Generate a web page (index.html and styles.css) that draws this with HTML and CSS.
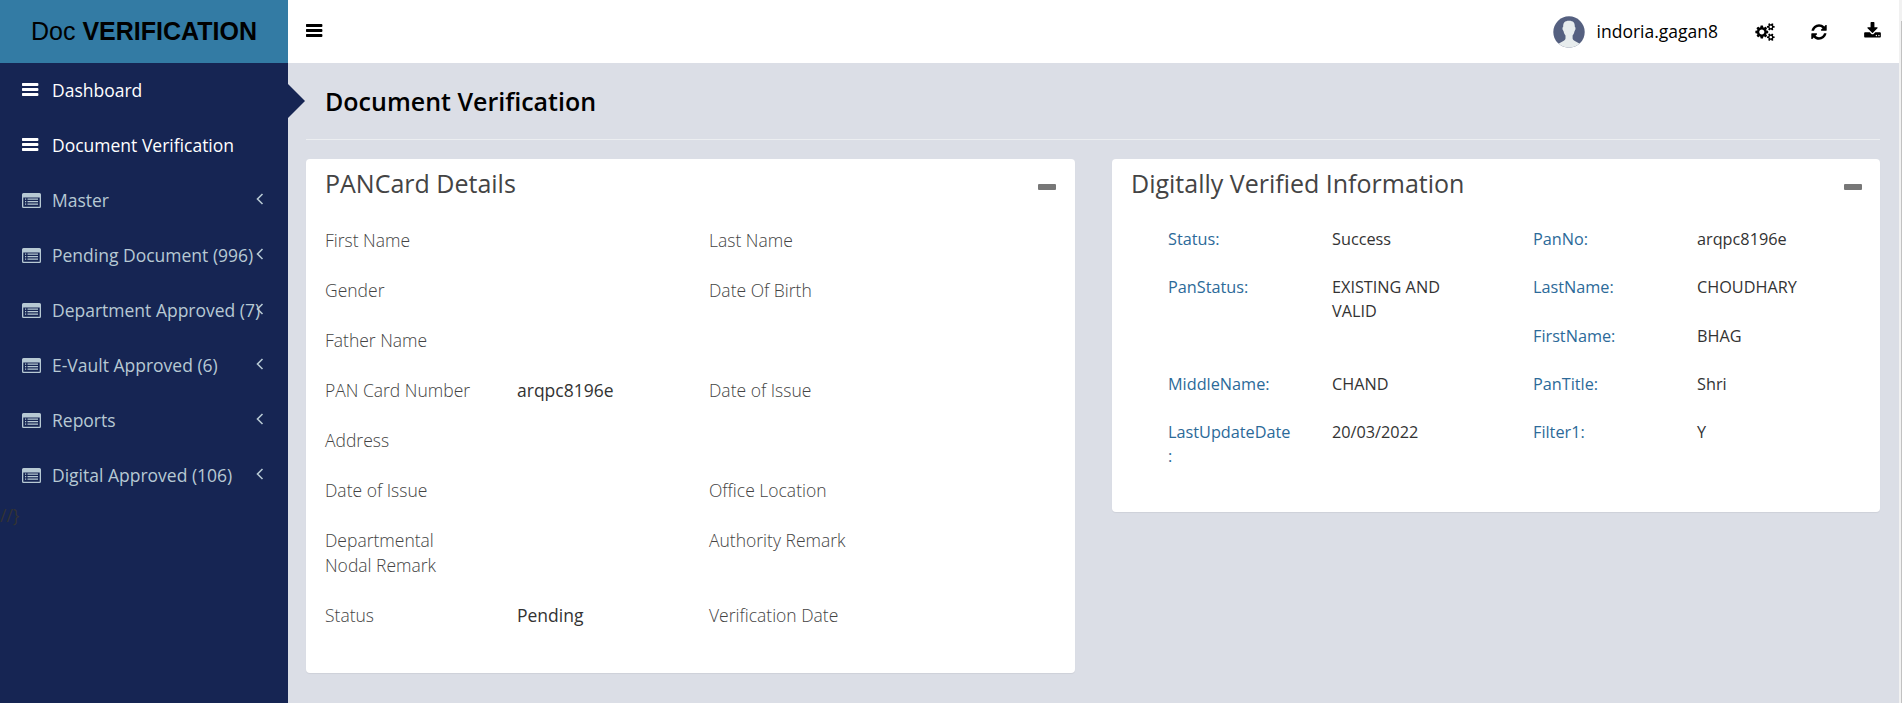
FILE: index.html
```html
<!DOCTYPE html>
<html lang="en">
<head>
<meta charset="utf-8">
<title>Document Verification</title>
<link rel="stylesheet" href="styles.css">
</head>
<body>
<svg class="defs" width="0" height="0">
  <symbol id="bars" viewBox="0 0 17 14"><path d="M.5 0h15q.9 0 .9.9v1.200q0 .9-.9.9H.5Q0 3 0 2.100V.9Q0 0 .5 0zM.5 5h15q.9 0 .9.900v1.200q0 .9-.9.9H.5Q0 8 0 7.100V5.900Q0 5 .5 5zM.5 10h15q.9 0 .9.900v1.200q0 .9-.9.9H.5q-.5 0-.5-.9v-1.200q0-.9.5-.9z"/></symbol>
  <symbol id="list" viewBox="0 0 19 15"><path fill-rule="evenodd" d="M1.500 0h16Q19 0 19 1.500v12q0 1.500-1.500 1.500h-16Q0 15 0 13.500v-12Q0 0 1.500 0zM1.300 4.500v8.700q0 .6.600.6h15.200q.6 0 .6-.6V4.500z"/><path d="M3 5.500h1.200v1.200H3zm2.500 0h10.500v1.200H5.500zM3 8h1.200v1.200H3zm2.500 0h10.500v1.200H5.500zM3 10.500h1.200v1.200H3zm2.500 0h10.500v1.200H5.500z"/></symbol>
  <symbol id="angle" viewBox="0 0 8 12"><path d="M6.500 1 1.500 6l5 5" fill="none" stroke="currentColor" stroke-width="1.600"/></symbol>
  <symbol id="gears" viewBox="0 0 1920 1792"><path d="M896 896q0-106-75-181t-181-75-181 75-75 181 75 181 181 75 181-75 75-181zm768 512q0-52-38-90t-90-38-90 38-38 90q0 53 37.500 90.500t90.500 37.500 90.500-37.500 37.500-90.500zm0-1024q0-52-38-90t-90-38-90 38-38 90q0 53 37.500 90.500t90.500 37.500 90.500-37.500 37.500-90.500zm-384 421v185q0 10-7 19.500t-16 10.500l-155 24q-11 35-32 76 34 48 90 115 7 11 7 20 0 12-7 19-23 30-82.500 89.500t-78.500 59.500q-11 0-21-7l-115-90q-37 19-77 31-11 108-23 155-7 24-30 24h-186q-11 0-20-7.500t-10-17.500l-23-153q-34-10-75-31l-118 89q-7 7-20 7-11 0-21-8-144-133-144-160 0-9 7-19 10-14 41-53t47-61q-23-44-35-82l-152-24q-10-1-17-9.500t-7-19.500v-185q0-10 7-19.500t16-10.500l155-24q11-35 32-76-34-48-90-115-7-11-7-20 0-12 7-20 22-30 82-89t79-59q11 0 21 7l115 90q34-18 77-32 11-108 23-154 7-24 30-24h186q11 0 20 7.500t10 17.500l23 153q34 10 75 31l118-89q8-7 20-7 11 0 21 8 144 133 144 160 0 8-7 19-12 16-42 54t-45 60q23 48 34 82l152 23q10 2 17 10.500t7 19.500zm640 533v140q0 16-149 31-12 27-30 52 51 113 51 138 0 4-4 7-122 71-124 71-8 0-46-47t-52-68q-20 2-30 2t-30-2q-14 21-52 68t-46 47q-2 0-124-71-4-3-4-7 0-25 51-138-18-25-30-52-149-15-149-31v-140q0-16 149-31 13-29 30-52-51-113-51-138 0-4 4-7 4-2 35-20t59-34 30-16q8 0 46 46.500t52 67.500q20-2 30-2t30 2q51-71 92-112l6-2q4 0 124 70 4 3 4 7 0 25-51 138 17 23 30 52 149 15 149 31zm0-1024v140q0 16-149 31-12 27-30 52 51 113 51 138 0 4-4 7-122 71-124 71-8 0-46-47t-52-68q-20 2-30 2t-30-2q-14 21-52 68t-46 47q-2 0-124-71-4-3-4-7 0-25 51-138-18-25-30-52-149-15-149-31v-140q0-16 149-31 13-29 30-52-51-113-51-138 0-4 4-7 4-2 35-20t59-34 30-16q8 0 46 46.500t52 67.500q20-2 30-2t30 2q51-71 92-112l6-2q4 0 124 70 4 3 4 7 0 25-51 138 17 23 30 52 149 15 149 31z"/></symbol>
  <symbol id="refresh" viewBox="0 0 1536 1792"><path d="M1511 1056q0 5-1 7-64 268-268 434.500t-478 166.500q-146 0-282.500-55t-243.500-157l-129 129q-19 19-45 19t-45-19-19-45v-448q0-26 19-45t45-19h448q26 0 45 19t19 45-19 45l-137 137q71 66 161 102t187 36q134 0 250-65t186-179q11-17 53-117 8-23 30-23h192q13 0 22.500 9.500t9.500 22.500zm25-800v448q0 26-19 45t-45 19h-448q-26 0-45-19t-19-45 19-45l138-138q-148-137-349-137-134 0-250 65t-186 179q-11 17-53 117-8 23-30 23h-199q-13 0-22.500-9.500t-9.500-22.500v-7q65-268 270-434.500t480-166.500q146 0 284 55.500t245 156.500l130-129q19-19 45-19t45 19 19 45z"/></symbol>
  <symbol id="download" viewBox="0 0 1664 1792"><path d="M1280 1344q0-26-19-45t-45-19-45 19-19 45 19 45 45 19 45-19 19-45zm256 0q0-26-19-45t-45-19-45 19-19 45 19 45 45 19 45-19 19-45zm128-224v320q0 40-28 68t-68 28h-1472q-40 0-68-28t-28-68v-320q0-40 28-68t68-28h465l135 136q58 56 136 56t136-56l136-136h464q40 0 68 28t28 68zm-325-569q17 41-14 70l-448 448q-18 19-45 19t-45-19l-448-448q-31-29-14-70 17-39 59-39h256v-448q0-26 19-45t45-19h256q26 0 45 19t19 45v448h256q42 0 59 39z"/></symbol>
</svg>
<div class="app">
  <aside class="sidebar">
    <div class="brand"><span>Doc <b>VERIFICATION</b></span></div>
    <nav class="menu">
      <a class="item active"><svg class="ic-bars"><use href="#bars"/></svg><span>Dashboard</span></a>
      <a class="item active"><svg class="ic-bars"><use href="#bars"/></svg><span>Document Verification</span></a>
      <a class="item"><svg class="ic-list"><use href="#list"/></svg><span>Master</span><svg class="ic-angle"><use href="#angle"/></svg></a>
      <a class="item"><svg class="ic-list"><use href="#list"/></svg><span>Pending Document (996)</span><svg class="ic-angle"><use href="#angle"/></svg></a>
      <a class="item"><svg class="ic-list"><use href="#list"/></svg><span>Department Approved (7)</span><svg class="ic-angle"><use href="#angle"/></svg></a>
      <a class="item"><svg class="ic-list"><use href="#list"/></svg><span>E-Vault Approved (6)</span><svg class="ic-angle"><use href="#angle"/></svg></a>
      <a class="item"><svg class="ic-list"><use href="#list"/></svg><span>Reports</span><svg class="ic-angle"><use href="#angle"/></svg></a>
      <a class="item"><svg class="ic-list"><use href="#list"/></svg><span>Digital Approved (106)</span><svg class="ic-angle"><use href="#angle"/></svg></a>
    </nav>
    <div class="stray">//}</div>
  </aside>
  <div class="main">
    <header class="topbar">
      <svg class="ic-toggle"><use href="#bars"/></svg>
      <div class="tools">
        <svg class="avatar" viewBox="0 0 32 32"><defs><clipPath id="round"><circle cx="16" cy="16" r="15.700"/></clipPath></defs><g clip-path="url(#round)"><path fill="#556080" d="M0 0h32v32H0z"/><path fill="#e7eced" d="M16 4.800c4.300 0 6 2 5.800 6l.3.300c.7.700.6 3-.5 4-.4 2-1 3.200-2 4.300v3.200c.3 1.700 1.500 2.200 3.600 3.100 1.700.8 3 1.600 4 2.600V32H5v-3.700c1-1 2.300-1.800 4-2.600 2.100-.9 3.300-1.400 3.500-3.100v-3.200c-1-1.100-1.700-2.300-2-4.300-1.200-1-1.300-3.300-.6-4l.3-.3c-.2-4 1.500-6 5.800-6z"/></g></svg>
        <span class="user">indoria.gagan8</span>
        <svg class="ic-gears"><use href="#gears"/></svg>
        <svg class="ic-refresh"><use href="#refresh"/></svg>
        <svg class="ic-download"><use href="#download"/></svg>
      </div>
    </header>
    <main class="content">
      <h1 class="title">Document Verification</h1>
      <div class="panels">
        <section class="panel">
          <div class="panel-head"><h2>PANCard Details</h2><i class="minus"></i></div>
          <div class="form">
            <label>First Name</label><p></p><label>Last Name</label><p></p>
            <label>Gender</label><p></p><label>Date Of Birth</label><p></p>
            <label>Father Name</label><p></p><label></label><p></p>
            <label>PAN Card Number</label><p>arqpc8196e</p><label>Date of Issue</label><p></p>
            <label>Address</label><p></p><label></label><p></p>
            <label>Date of Issue</label><p></p><label>Office Location</label><p></p>
            <label>Departmental<br>Nodal Remark</label><p></p><label>Authority Remark</label><p></p>
            <label>Status</label><p>Pending</p><label>Verification Date</label><p></p>
          </div>
        </section>
        <section class="panel">
          <div class="panel-head"><h2>Digitally Verified Information</h2><i class="minus"></i></div>
          <div class="info">
            <div class="col">
              <div class="pair"><label>Status:</label><p>Success</p></div>
              <div class="pair tall"><label>PanStatus:</label><p>EXISTING AND<br>VALID</p></div>
              <div class="pair"><label>MiddleName:</label><p>CHAND</p></div>
              <div class="pair"><label>LastUpdateDate<br>:</label><p>20/03/2022</p></div>
            </div>
            <div class="col">
              <div class="pair"><label>PanNo:</label><p>arqpc8196e</p></div>
              <div class="pair last-name"><label>LastName:</label><p>CHOUDHARY</p></div>
              <div class="pair"><label>FirstName:</label><p>BHAG</p></div>
              <div class="pair"><label>PanTitle:</label><p>Shri</p></div>
              <div class="pair"><label>Filter1:</label><p>Y</p></div>
            </div>
          </div>
        </section>
      </div>
    </main>
  </div>
  <div class="scrollbar"><div class="thumb"></div></div>
</div>
</body>
</html>
```
FILE: styles.css
```css
* { box-sizing: border-box; }
body { margin: 0; height: 703px; overflow: hidden; background: #dbdee6; font-family: "Open Sans", sans-serif; }
h1, h2, p { margin: 0; }
svg { fill: currentColor; flex: none; display: block; }
.defs { position: absolute; }
.app { display: flex; height: 703px; }
.sidebar { width: 288px; flex: none; background: #162553; }
.brand { height: 63px; padding-bottom: 1px; background: #337ba4; color: #000; display: flex; align-items: center; justify-content: center; font: 25px/30px "Liberation Sans", sans-serif; white-space: nowrap; }
.menu { display: flex; flex-direction: column; }
.item { position: relative; height: 55px; padding: 0 0 1px 22px; display: flex; align-items: center; color: #b7c9d3; font-size: 17.500px; line-height: 24px; white-space: nowrap; }
.item.active { color: #fff; }
.item span { padding-bottom: 1px; }
.ic-bars { width: 17px; height: 14px; margin-right: 13px; }
.ic-list { width: 19px; height: 15px; margin-right: 11px; }
.ic-angle { position: absolute; left: 256px; top: 20px; width: 8px; height: 12px; }
.stray { color: #333; font-size: 17.500px; line-height: 25px; }
.main { flex: 1; min-width: 0; }
.topbar { height: 63px; background: #fff; display: flex; align-items: center; justify-content: space-between; padding: 0 18px 0 18px; }
.ic-toggle { width: 17px; height: 14px; margin-top: -1px; }
.tools { display: flex; align-items: center; color: #000; }
.avatar { width: 32px; height: 32px; }
.user { font-size: 17.500px; margin-left: 12px; line-height: 24px; padding-bottom: 2px; }
.ic-gears { width: 20px; height: 18px; margin-left: 37px; }
.ic-refresh { width: 16px; height: 18px; margin-left: 36px; }
.ic-download { width: 17px; height: 18px; margin: -1px 0 0 37px; }
.content { padding: 0 19px 0 18px; position: relative; }
.content::before { content: ""; position: absolute; left: 0; top: 21px; border: 17px solid transparent; border-left-color: #162553; border-right: 0; }
.title { height: 77px; padding: 20px 0 0 19px; border-bottom: 1px solid #eceef1; font-size: 25px; line-height: 36px; font-weight: 600; color: #000; }
.panels { display: grid; grid-template-columns: 769px 768px; column-gap: 37px; align-items: start; padding-top: 19px; }
.panel { background: #fff; border-radius: 4px; box-shadow: 0 1px 1px rgba(0,0,0,.06); }
.panel-head { display: flex; justify-content: space-between; padding: 6px 18px 0 19px; height: 65px; }
.panel:first-child .panel-head { padding-right: 19px; }
h2 { font-size: 25px; line-height: 36px; font-weight: 400; color: #444; }
.minus { width: 18px; height: 6px; border-radius: 1px; background: #777; margin-top: 19px; }
.form { display: grid; grid-template-columns: 192px 192px 192px 1fr; row-gap: 25px; padding: 4px 0 45px 19px; font-size: 17.500px; line-height: 25px; }
.form label { font-weight: 300; color: #444; min-height: 25px; }
.form p { color: #333; }
.info { display: flex; padding: 3px 0 44px 56px; font-size: 16.250px; line-height: 24px; }
.col { width: 365px; flex: none; }
.col:last-child { width: 340px; }
.pair { display: grid; grid-template-columns: 164px 1fr; min-height: 48px; }
.pair.tall { min-height: 97px; }
.pair.last-name { min-height: 49px; }
.info label { color: #2c6a99; }
.info p { color: #333; }
.scrollbar { width: 3px; flex: none; background: #f1f1f1; padding: 21px 0 0 2px; }
.thumb { height: 682px; background: #c1c1c1; }
```
